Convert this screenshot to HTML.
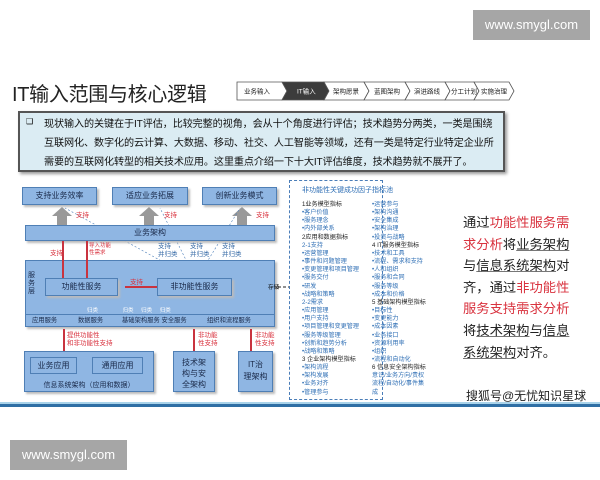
<!DOCTYPE html><html><head><meta charset="utf-8"><style>
*{margin:0;padding:0;box-sizing:border-box}
body{width:600px;height:480px;background:#fff;position:relative;overflow:hidden;font-family:"Liberation Sans","Noto Sans CJK SC",sans-serif}
.a{position:absolute}
.wm{background:#a6a6a6;color:#fff;font-size:13px;text-align:center;line-height:30px}
.b{position:absolute;background:#8fb6e3;border:1px solid #4f7fb5;color:#1a2a4a;font-size:8px;text-align:center;box-shadow:2px 2px 2px #bbb;white-space:nowrap}
.r{color:#d9333f;font-size:6.5px;position:absolute;line-height:8px;white-space:nowrap}
.s{color:#3b6ea8;font-size:6.5px;position:absolute;line-height:8px}
.pl{position:absolute;font-size:6.1px;line-height:8.15px;color:#2f6fb5;white-space:nowrap}
.pl b{color:#222;font-weight:normal}
.rl{position:absolute;background:#c9333f}
.u{text-decoration:underline;text-decoration-color:#777}
.red{color:#d9333f}
.pp{position:absolute;left:44px;font-size:10.1px;color:#111;white-space:nowrap;letter-spacing:-0.1px}
</style></head><body>
<div class="a wm" style="left:473px;top:10px;width:117px;height:30px">www.smygl.com</div>
<div class="a wm" style="left:10px;top:440px;width:117px;height:30px">www.smygl.com</div>
<div class="a" style="left:12px;top:78px;font-size:20px;color:#222;letter-spacing:-0.3px">IT输入范围与核心逻辑</div>
<svg class="a" style="left:236px;top:81px" width="280" height="20">
<g fill="#fff" stroke="#555" stroke-width="0.8">
<polygon points="1,1 46,1 51,10 46,19 1,19"/>
<polygon points="46,1 88,1 93,10 88,19 46,19 51,10" fill="#3c3c3c"/>
<polygon points="88,1 128,1 133,10 128,19 88,19 93,10"/>
<polygon points="128,1 169,1 174,10 169,19 128,19 133,10"/>
<polygon points="169,1 209,1 214,10 209,19 169,19 174,10"/>
<polygon points="209,1 238,1 243,10 238,19 209,19 214,10"/>
<polygon points="238,1 273,1 278,10 273,19 238,19 243,10"/>
</g>
<g font-size="6.5" fill="#222" font-family="Liberation Sans,Noto Sans CJK SC,sans-serif">
<text x="8" y="12.5">业务输入</text><text x="61" y="12.5" fill="#fff">IT输入</text><text x="97" y="12.5">架构愿景</text><text x="138" y="12.5">蓝图架构</text><text x="178" y="12.5">演进路线</text><text x="215" y="12.5">分工计划</text><text x="245" y="12.5">实施治理</text></g></svg>
<div class="a" style="left:18px;top:111px;width:487px;height:61px;background:#dbecf3;border:2px solid #555;box-shadow:2px 2px 3px #999"></div>
<div class="a" style="left:26px;top:117px;font-size:8px">❑</div>
<div class="pp" style="top:115px">现状输入的关键在于IT评估，比较完整的视角，会从十个角度进行评估；技术趋势分两类，一类是围绕</div>
<div class="pp" style="top:134px">互联网化、数字化的云计算、大数据、移动、社交、人工智能等领域，还有一类是特定行业特定企业所</div>
<div class="pp" style="top:153px">需要的互联网化转型的相关技术应用。这里重点介绍一下十大IT评估维度，技术趋势就不展开了。</div>

<div class="b" style="left:22px;top:187px;width:75px;height:18px;line-height:16px">支持业务效率</div>
<div class="b" style="left:112px;top:187px;width:76px;height:18px;line-height:16px">适应业务拓展</div>
<div class="b" style="left:202px;top:187px;width:75px;height:18px;line-height:16px">创新业务模式</div>
<svg class="a" style="left:0;top:180px" width="300" height="160">
<g fill="#999"><polygon points="62,27 52,36 57,36 57,45 67,45 67,36 72,36"/><polygon points="149,27 139,36 144,36 144,45 154,45 154,36 159,36"/><polygon points="242,27 232,36 237,36 237,45 247,45 247,36 252,36"/></g>
<g stroke="#4a7db8" stroke-width="0.6" stroke-dasharray="2,2" fill="none"><line x1="196" y1="100" x2="65" y2="28"/><line x1="196" y1="100" x2="160" y2="28"/><line x1="196" y1="100" x2="240" y2="28"/><line x1="190" y1="115" x2="40" y2="135"/><line x1="190" y1="115" x2="100" y2="135"/><line x1="190" y1="115" x2="165" y2="135"/><line x1="190" y1="115" x2="190" y2="135"/><line x1="190" y1="115" x2="212" y2="135"/></g>
<line x1="233" y1="107" x2="290" y2="107" stroke="#222" stroke-dasharray="3,2"/>
</svg>
<div class="r" style="left:76px;top:212px">支持</div><div class="r" style="left:164px;top:212px">支持</div><div class="r" style="left:256px;top:212px">支持</div>
<div class="b" style="left:25px;top:225px;width:250px;height:16px;line-height:14px">业务架构</div>
<div class="s" style="left:158px;top:243px">支持<br>并归类</div><div class="s" style="left:190px;top:243px">支持<br>并归类</div><div class="s" style="left:222px;top:243px">支持<br>并归类</div>
<div class="b" style="left:25px;top:260px;width:250px;height:67px"></div>
<div class="a" style="left:28px;top:272px;font-size:7px;width:8px;line-height:8px;color:#1a2a4a">服务层</div>
<div class="b" style="left:45px;top:278px;width:73px;height:18px;line-height:16px">功能性服务</div>
<div class="b" style="left:157px;top:278px;width:75px;height:18px;line-height:16px">非功能性服务</div>
<div class="a" style="left:25px;top:314px;width:250px;height:13px;border-top:1px solid #4f7fb5;font-size:6.3px;line-height:12px;color:#1a2a4a;white-space:nowrap"><span style="position:absolute;left:7px">应用服务</span><span style="position:absolute;left:53px">数据服务</span><span style="position:absolute;left:97px">基础架构服务 安全服务</span><span style="position:absolute;left:182px">组织和流程服务</span></div>
<div class="a" style="left:87px;top:306px;font-size:5.5px;color:#fff;white-space:nowrap">归类 &nbsp; &nbsp; &nbsp; &nbsp; &nbsp; &nbsp; &nbsp; &nbsp;归类 &nbsp; &nbsp; 归类 &nbsp; &nbsp; 归类</div>
<div class="rl" style="left:62px;top:241px;width:1.5px;height:37px"></div><div class="r" style="left:50px;top:250px">支持</div>
<div class="rl" style="left:86px;top:241px;width:1.5px;height:37px"></div><div class="r" style="left:89px;top:243px;font-size:5.5px;line-height:7px">导入功能<br>性需求</div>
<div class="rl" style="left:125px;top:286px;width:32px;height:1.5px"></div><div class="r" style="left:130px;top:279px">支持</div>
<div class="a" style="left:268px;top:283px;font-size:5.5px">存储</div>
<div class="rl" style="left:63px;top:329px;width:1.5px;height:22px"></div><div class="r" style="left:67px;top:332px">提供功能性<br>和非功能性支持</div>
<div class="rl" style="left:193px;top:329px;width:1.5px;height:22px"></div><div class="r" style="left:198px;top:332px">非功能<br>性支持</div>
<div class="rl" style="left:250px;top:329px;width:1.5px;height:22px"></div><div class="r" style="left:255px;top:332px">非功能<br>性支持</div>
<div class="b" style="left:24px;top:351px;width:130px;height:41px"></div>
<div class="b" style="left:30px;top:357px;width:47px;height:17px;line-height:15px;box-shadow:none">业务应用</div>
<div class="b" style="left:92px;top:357px;width:51px;height:17px;line-height:15px;box-shadow:none">通用应用</div>
<div class="a" style="left:24px;top:380px;width:130px;text-align:center;font-size:7px;color:#1a2a4a">信息系统架构（应用和数据）</div>
<div class="b" style="left:173px;top:351px;width:42px;height:41px;line-height:11px;padding-top:5px">技术架<br>构与安<br>全架构</div>
<div class="b" style="left:238px;top:351px;width:35px;height:41px;line-height:12px;padding-top:7px">IT治<br>理架构</div>

<div class="a" style="left:289px;top:180px;width:94px;height:220px;border:1px dashed #4a7db8"></div>
<div class="a" style="left:302px;top:185px;font-size:7px;color:#2f6fb5;white-space:nowrap">非功能性关键成功因子指标池</div>
<div class="pl" style="left:302px;top:201px"><b>1业务模型指标</b><br>•客户价值<br>•服务理念<br>•内外部关系<br><b>2应用和数据指标</b><br>2-1支持<br>•运营管理<br>•事件和问题管理<br>•变更管理和项目管理<br>•服务交付<br>•研发<br>•战略和策略<br>2-2需求<br>•应用管理<br>•用户支持<br>•项目管理和变更管理<br>•服务等级管理<br>•创新和趋势分析<br>•战略和策略<br><b>3 企业架构模型指标</b><br>•架构流程<br>•架构发展<br>•业务对齐<br>•管理参与</div>
<div class="pl" style="left:372px;top:201px">•运营参与<br>•架构沟通<br>•安全集成<br>•架构治理<br>•投资与战略<br><b>4 IT服务模型指标</b><br>•技术和工具<br>•流程、需求和支持<br>•人和组织<br>•服务和合同<br>•服务等级<br>•成本和价格<br><b>5 基础架构模型指标</b><br>•目标性<br>•变更能力<br>•成本因素<br>•业务接口<br>•资源利用率<br>•组织<br>•流程和自动化<br><b>6 信息安全架构指标</b><br>意识/业务方向/责权<br>流程/自动化/事件集<br>成</div>

<div class="a" style="left:463px;top:212px;width:110px;font-size:13.3px;line-height:21.6px;color:#222">通过<span class="red">功能性服务需求分析</span>将<span class="u">业务架构</span>与<span class="u">信息系统架构</span>对齐，通过<span class="red">非功能性服务支持需求分析</span>将<span class="u">技术架构</span>与<span class="u">信息系统架构</span>对齐。</div>
<div class="a" style="left:466px;top:387px;font-size:12px;color:#222">搜狐号@无忧知识星球</div>
<div class="a" style="left:0;top:402px;width:600px;height:2px;background:#a9d3ea"></div>
<div class="a" style="left:0;top:404px;width:600px;height:3px;background:#2f6fa5"></div>
</body></html>
